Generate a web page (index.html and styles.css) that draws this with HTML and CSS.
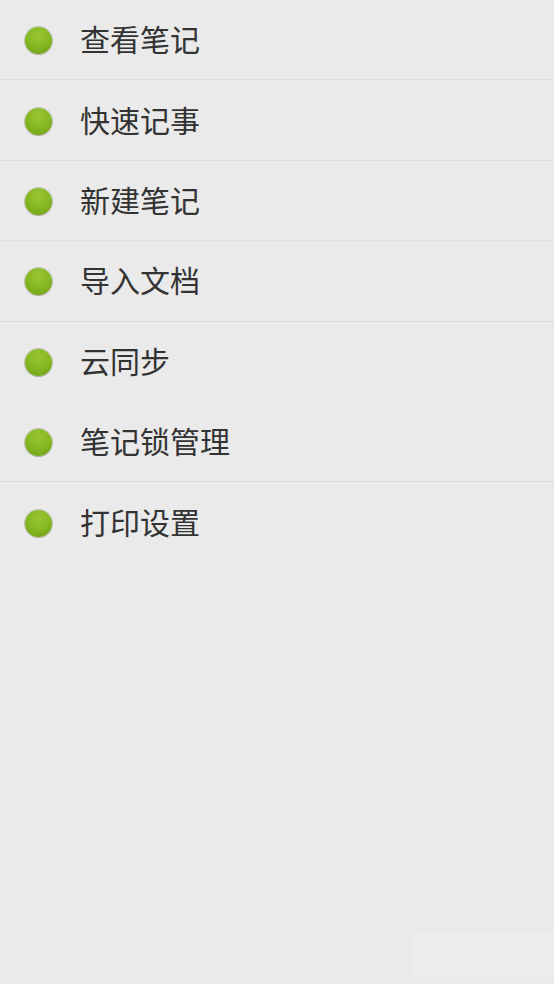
FILE: index.html
```html
<!DOCTYPE html>
<html lang="zh-CN">
<head>
<meta charset="utf-8">
<title>笔记菜单</title>
<link rel="stylesheet" href="styles.css">
</head>
<body>
<ul class="menu">
  <li class="item sep-a"><span class="dot"></span><span class="label">查看笔记</span></li>
  <li class="item sep-a"><span class="dot"></span><span class="label">快速记事</span></li>
  <li class="item sep-c"><span class="dot"></span><span class="label">新建笔记</span></li>
  <li class="item sep-b"><span class="dot"></span><span class="label">导入文档</span></li>
  <li class="item sep-d"><span class="dot"></span><span class="label">云同步</span></li>
  <li class="item sep-b"><span class="dot"></span><span class="label">笔记锁管理</span></li>
  <li class="item"><span class="dot"></span><span class="label">打印设置</span></li>
</ul>
<div class="ghost"></div>
</body>
</html>
```

FILE: styles.css
```css
html, body {
  margin: 0;
  padding: 0;
  background: #eaeaea;
  height: 100%;
}
body {
  font-family: "Noto Sans CJK SC", "Noto Sans", sans-serif;
  position: relative;
  overflow: hidden;
}
.menu {
  list-style: none;
  margin: 0;
  padding: 0;
}
.item {
  box-sizing: border-box;
  height: 80.4px;
  display: flex;
  align-items: center;
  border-bottom: 1px solid transparent;
}
.sep-a { border-bottom-color: #dedede; }
.sep-b { border-bottom-color: #d7d7d7; }
.sep-c { border-bottom-color: #e2e2e2; }
.sep-d { border-bottom-color: #e6e6e6; }
.dot {
  box-sizing: border-box;
  width: 27px;
  height: 27px;
  margin-left: 25px;
  margin-top: 2px;
  border-radius: 50%;
  background: radial-gradient(circle at 50% 30%, #98c632 0%, #86b823 50%, #6c9c0e 100%);
  box-shadow: 0 0 0 1px rgba(120, 130, 90, 0.35), 0 1px 1px rgba(0, 0, 0, 0.15);
  flex: none;
}
.label {
  margin-left: 28px;
  font-size: 30px;
  line-height: 1;
  color: #333333;
  margin-top: -3px;
}
.ghost {
  position: absolute;
  right: 0;
  bottom: 9px;
  width: 142px;
  height: 43px;
  background: #ededed;
}
```
